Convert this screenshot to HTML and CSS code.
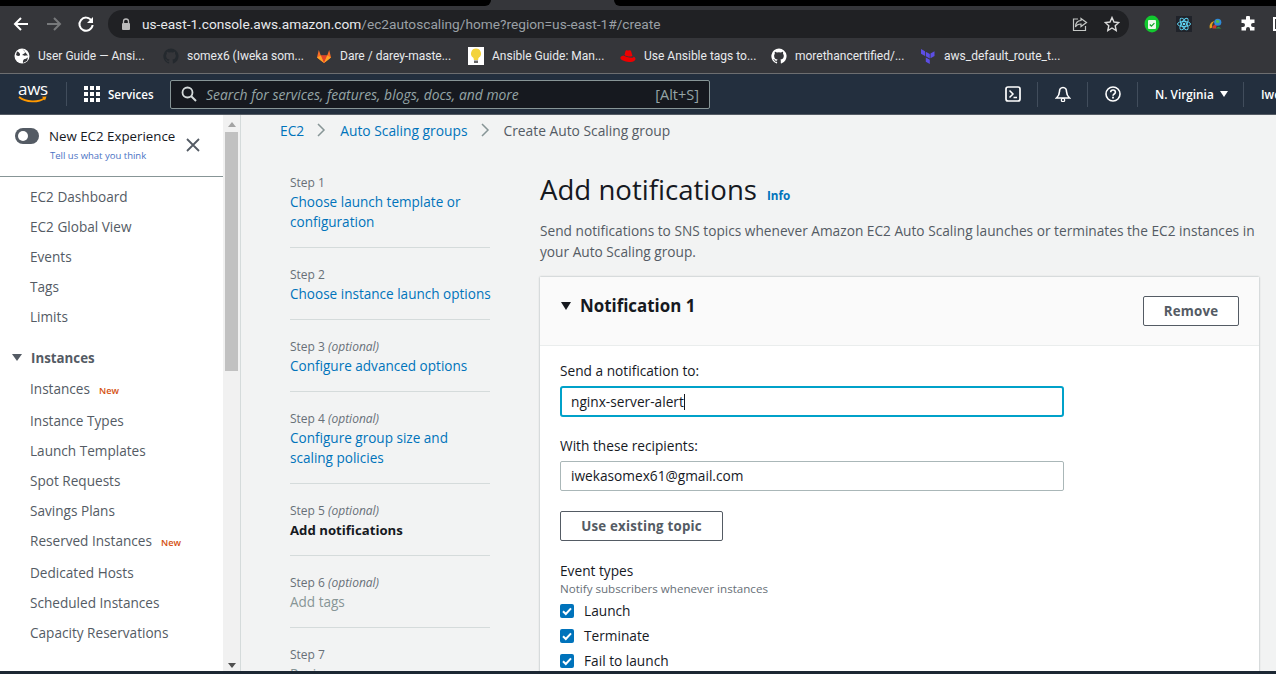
FILE: index.html
```html
<!DOCTYPE html>
<html lang="en">
<head>
<meta charset="utf-8">
<title>Create Auto Scaling group</title>
<link rel="stylesheet" href="styles.css">
</head>
<body>
<div class="window">
  <div class="tabstrip"><div class="tab-l"></div><div class="tab-gap"></div><div class="tab-r"></div></div>
  <div class="toolbar">
    <svg class="tb-ico" width="18" height="18" viewBox="0 0 18 18"><path d="M16 9H3M9 3L3 9l6 6" fill="none" stroke="#fff" stroke-width="2"/></svg>
    <svg class="tb-ico" width="18" height="18" viewBox="0 0 18 18"><path d="M2 9h13M9 3l6 6-6 6" fill="none" stroke="#77797b" stroke-width="2"/></svg>
    <svg class="tb-ico" width="18" height="18" viewBox="0 0 18 18"><path d="M14.5 5.5A6.6 6.6 0 1 0 15.6 10" fill="none" stroke="#fff" stroke-width="2"/><path d="M16 2v6h-6z" fill="#fff"/></svg>
    <div class="omnibox">
      <svg width="10" height="13" viewBox="0 0 10 13"><path d="M2.5 5V3.5a2.5 2.5 0 0 1 5 0V5" fill="none" stroke="#bbb" stroke-width="1.3"/><rect x="1" y="5" width="8" height="7" rx="1" fill="#bbb"/></svg>
      <div class="url"><span class="url-host">us-east-1.console.aws.amazon.com</span>/ec2autoscaling/home?region=us-east-1#/create</div>
      <svg class="omni-ico" width="16" height="16" viewBox="0 0 16 16"><path d="M6 3H1.500v11.500h12V10M9 2.500l5.500 4-5.500 4V8C6 8 4.500 9 3.500 11c0-4 2-6.500 5.500-6.500z" fill="none" stroke="#c4c7c5" stroke-width="1.200"/></svg>
      <svg class="omni-ico" width="16" height="16" viewBox="0 0 16 16"><path d="M8 1.500l2 4.500 4.800.5-3.600 3.200 1 4.800L8 12l-4.200 2.500 1-4.800L1.200 6.500 6 6z" fill="none" stroke="#dcdcdc" stroke-width="1.400"/></svg>
    </div>
    <div class="ext-row">
      <svg width="16" height="18" viewBox="0 0 16 18"><ellipse cx="8" cy="9" rx="7.500" ry="8.500" fill="#12c92f"/><rect x="4" y="5" width="8" height="9" rx="1" fill="#eafbea"/><path d="M5.800 9.500l1.600 1.700 3-3" stroke="#12a02a" stroke-width="1.200" fill="none"/></svg>
      <svg width="16" height="16" viewBox="0 0 16 16"><rect width="16" height="16" fill="#20232a"/><g fill="none" stroke="#61dafb" stroke-width=".9"><ellipse cx="8" cy="8" rx="6.500" ry="2.600"/><ellipse cx="8" cy="8" rx="6.500" ry="2.600" transform="rotate(60 8 8)"/><ellipse cx="8" cy="8" rx="6.500" ry="2.600" transform="rotate(120 8 8)"/></g><circle cx="8" cy="8" r="1.300" fill="#61dafb"/></svg>
      <svg width="16" height="16" viewBox="0 0 18 16"><path d="M2 13C1 8 4 5 8 5c-3 1-4 4-3 7z" fill="#e2a11a"/><path d="M5 13c0-3 2-5 5-5l-1 5z" fill="#d3352c"/><circle cx="11" cy="6" r="4" fill="#2f8bd8"/><path d="M9 4c2-1 4 0 4 2-1 1-3 1-4 0z" fill="#4fc04a"/><path d="M8 13h7l-3-2z" fill="#2e9a3a"/></svg>
      <svg width="16" height="16" viewBox="0 0 16 16"><path d="M6 1.500a2 2 0 0 1 4 0V3.500h4.500V7h-1.500a2 2 0 0 0 0 4h1.500v3.500H10V13a2 2 0 0 0-4 0v1.500H1.500V11H3a2 2 0 0 0 0-4H1.500V3.500H6z" fill="#fff"/></svg>
    </div>
    <div class="profile-edge"></div>
  </div>
  <div class="bookmarks">
    <div class="bm"><svg class="bm-ico" width="16" height="16" viewBox="0 0 16 16"><circle cx="8" cy="8" r="7.500" fill="#fff"/><path d="M3 3.500c2 .5 3.500 2 3 3.500S3.500 8 2 7M9 15c-.5-2 .5-4 2-4s2-1.500 3-1.500L13 13zM8.500 1c1 1 3 2 2.500 3.500S8 6 8.500 7s3 .5 5.500.5" fill="#35363a"/></svg><span>User Guide — Ansi...</span></div>
    <div class="bm"><svg class="bm-ico" width="16" height="16" viewBox="0 0 16 16"><path d="M8 .5a7.700 7.700 0 0 0-2.400 15c.4 0 .5-.2.500-.4v-1.400c-2.100.5-2.600-1-2.600-1-.4-.9-.9-1.100-.9-1.100-.7-.5 0-.5 0-.5.800 0 1.200.8 1.200.8.700 1.200 1.900.9 2.300.7 0-.5.300-.9.500-1.100-1.700-.2-3.500-.9-3.500-3.800 0-.8.300-1.500.8-2-.1-.2-.4-1 0-2 0 0 .7-.2 2.100.8a7 7 0 0 1 3.800 0c1.500-1 2.100-.8 2.100-.8.400 1 .2 1.800.1 2 .5.500.8 1.200.8 2 0 3-1.800 3.600-3.500 3.800.3.200.5.700.5 1.400v2.200c0 .2.100.5.500.4A7.700 7.700 0 0 0 8 .5z" fill="#24292e"/></svg><span>somex6 (Iweka som...</span></div>
    <div class="bm"><svg class="bm-ico" width="16" height="16" viewBox="0 0 16 16"><path d="M8 15L1 9.500 2.800 2l2 5.500h6.400l2-5.500L15 9.500z" fill="#fc6d26"/><path d="M8 15L4.800 7.500h6.400z" fill="#e24329"/><path d="M1 9.500L8 15 4.800 7.500zM15 9.500L8 15l3.200-7.500z" fill="#fca326"/></svg><span>Dare / darey-maste...</span></div>
    <div class="bm"><svg class="bm-ico" width="16" height="18" viewBox="0 0 16 18"><rect width="16" height="18" fill="#fff"/><path d="M8 1.500a5 5 0 0 1 3 9c-.7.600-.8 1.500-.8 2.500H5.800c0-1-.1-1.900-.8-2.500a5 5 0 0 1 3-9z" fill="#f3d33b"/><rect x="6" y="13.500" width="4" height="2.500" fill="#666"/></svg><span>Ansible Guide: Man...</span></div>
    <div class="bm"><svg class="bm-ico" width="16" height="14" viewBox="0 0 16 14"><path d="M4.500 6l1-4c.2-.8 1.200-1 2-.6.500.2 1 .2 1.500 0 .8-.4 1.800-.2 2 .6l1.500 5C10 8 6.500 7.500 4.500 6z" fill="#e00"/><path d="M3.500 6.500C1 7 0 8 .5 9.500c1 2 6 3.500 10 3.500 3 0 5-1.500 5-3 0-1-.8-2-2-2.500.2 1-.5 1.200-2 1.200-3 0-6-1-8-2.200z" fill="#e00"/></svg><span>Use Ansible tags to...</span></div>
    <div class="bm"><svg class="bm-ico" width="16" height="16" viewBox="0 0 16 16"><path d="M8 .5a7.700 7.700 0 0 0-2.400 15c.4 0 .5-.2.500-.4v-1.400c-2.100.5-2.600-1-2.600-1-.4-.9-.9-1.100-.9-1.100-.7-.5 0-.5 0-.5.800 0 1.200.8 1.200.8.700 1.200 1.900.9 2.300.7 0-.5.300-.9.500-1.100-1.700-.2-3.500-.9-3.500-3.800 0-.8.300-1.500.8-2-.1-.2-.4-1 0-2 0 0 .7-.2 2.100.8a7 7 0 0 1 3.800 0c1.500-1 2.100-.8 2.100-.8.400 1 .2 1.800.1 2 .5.500.8 1.200.8 2 0 3-1.800 3.600-3.500 3.800.3.200.5.700.5 1.400v2.200c0 .2.100.5.500.4A7.700 7.700 0 0 0 8 .5z" fill="#fff"/></svg><span>morethancertified/...</span></div>
    <div class="bm"><svg class="bm-ico" width="16" height="16" viewBox="0 0 16 16"><path d="M1 1l4 2.300V8L1 5.700zM5.800 3.700l4 2.300v4.600l-4-2.300zM14.500 3.300l-4 2.300v4.600l4-2.300zM5.800 9.500l4 2.300v4.200l-4-2.300z" fill="#5c4ee5"/></svg><span>aws_default_route_t...</span></div>
  </div>
  <header class="awsbar">
    <div class="aws-logo">
      <span class="aws-word">aws</span>
      <svg width="30" height="8" viewBox="0 0 30 8"><path d="M1 1c7 5.500 19 6 26 1" fill="none" stroke="#f90" stroke-width="1.800"/><path d="M24 .8l4.500-.3-1.500 4z" fill="#f90"/></svg>
    </div>
    <div class="bar-sep"></div>
    <svg class="grid-ico" width="16" height="16" viewBox="0 0 16 16" fill="#fff"><rect width="4" height="4"/><rect x="6" width="4" height="4"/><rect x="12" width="4" height="4"/><rect y="6" width="4" height="4"/><rect x="6" y="6" width="4" height="4"/><rect x="12" y="6" width="4" height="4"/><rect y="12" width="4" height="4"/><rect x="6" y="12" width="4" height="4"/><rect x="12" y="12" width="4" height="4"/></svg>
    <span class="services">Services</span>
    <div class="search">
      <svg width="16" height="16" viewBox="0 0 16 16"><circle cx="6.500" cy="6.500" r="5" fill="none" stroke="#d5dbdb" stroke-width="1.800"/><path d="M10 10l5 5" stroke="#d5dbdb" stroke-width="2"/></svg>
      <span class="search-ph">Search for services, features, blogs, docs, and more</span>
      <span class="search-key">[Alt+S]</span>
    </div>
    <div class="bar-right">
      <div class="bar-item"><svg width="16" height="16" viewBox="0 0 16 16"><rect x="1" y="1" width="14" height="14" rx="2" fill="none" stroke="#fff" stroke-width="1.700"/><path d="M4.500 4.500L8 8l-3.500 3.500M8.500 11.500H12" fill="none" stroke="#fff" stroke-width="1.500"/></svg></div>
      <div class="bar-item"><svg width="16" height="16" viewBox="0 0 16 16"><path d="M8 1.500c-2.500 0-3.500 2-3.500 4 0 3-1 4.500-3 6.500h13c-2-2-3-3.500-3-6.500 0-2-1-4-3.500-4z" fill="none" stroke="#fff" stroke-width="1.600"/><circle cx="8" cy="14" r="1.700" fill="none" stroke="#fff" stroke-width="1.200"/></svg></div>
      <div class="bar-item"><svg width="16" height="16" viewBox="0 0 16 16"><circle cx="8" cy="8" r="7" fill="none" stroke="#fff" stroke-width="1.600"/><path d="M5.700 6.300c0-3 4.700-3 4.700 0 0 1.700-2.400 1.700-2.400 3.400" fill="none" stroke="#fff" stroke-width="1.600"/><rect x="7.100" y="10.700" width="1.800" height="1.800" fill="#fff"/></svg></div>
      <div class="bar-item region"><span>N. Virginia</span><i class="caret-w"></i></div>
      <div class="bar-item user"><span>Iweka</span></div>
    </div>
  </header>
  <div class="console">
    <aside class="sidenav">
      <div class="side-scroll">
        <div class="experience">
          <div class="toggle"><i></i></div>
          <div class="exp-text">
            <div class="exp-title">New EC2 Experience</div>
            <div class="exp-link">Tell us what you think</div>
          </div>
          <svg class="exp-close" width="14" height="14" viewBox="0 0 14 14"><path d="M1 1l12 12M13 1L1 13" stroke="#545b64" stroke-width="1.800"/></svg>
        </div>
        <nav class="navlist">
          <a>EC2 Dashboard</a>
          <a>EC2 Global View</a>
          <a>Events</a>
          <a>Tags</a>
          <a>Limits</a>
          <div class="navhead"><i class="caret-d"></i>Instances</div>
          <a class="tight">Instances<em>New</em></a>
          <a>Instance Types</a>
          <a>Launch Templates</a>
          <a>Spot Requests</a>
          <a>Savings Plans</a>
          <a class="tight">Reserved Instances<em>New</em></a>
          <a>Dedicated Hosts</a>
          <a>Scheduled Instances</a>
          <a>Capacity Reservations</a>
          <div class="navhead last"><i class="caret-d"></i>Images</div>
        </nav>
      </div>
      <div class="scrollbar">
        <i class="sb-up"></i>
        <div class="sb-thumb"></div>
        <i class="sb-down"></i>
      </div>
    </aside>
    <main class="content">
      <div class="crumbs">
        <a>EC2</a><svg width="9" height="14" viewBox="0 0 9 14"><path d="M1 1l6 6-6 6" fill="none" stroke="#879596" stroke-width="1.500"/></svg><a>Auto Scaling groups</a><svg width="9" height="14" viewBox="0 0 9 14"><path d="M1 1l6 6-6 6" fill="none" stroke="#879596" stroke-width="1.500"/></svg><span>Create Auto Scaling group</span>
      </div>
      <div class="wizard">
        <ol class="steps">
          <li><small>Step 1</small><a>Choose launch template or configuration</a></li>
          <li><small>Step 2</small><a>Choose instance launch options</a></li>
          <li><small>Step 3 <em>(optional)</em></small><a>Configure advanced options</a></li>
          <li><small>Step 4 <em>(optional)</em></small><a>Configure group size and scaling policies</a></li>
          <li><small>Step 5 <em>(optional)</em></small><b>Add notifications</b></li>
          <li><small>Step 6 <em>(optional)</em></small><span class="disabled">Add tags</span></li>
          <li><small>Step 7</small><span class="disabled">Review</span></li>
        </ol>
        <section class="form">
          <div class="title-row"><h1>Add notifications</h1><a class="info">Info</a></div>
          <p class="lede">Send notifications to SNS topics whenever Amazon EC2 Auto Scaling launches or terminates the EC2 instances in your Auto Scaling group.</p>
          <div class="card">
            <div class="card-head">
              <h2><i class="caret-k"></i>Notification 1</h2>
              <button class="btn remove">Remove</button>
            </div>
            <div class="card-body">
              <label class="lbl">Send a notification to:</label>
              <div class="input focus">nginx-server-alert<i class="cursor"></i></div>
              <label class="lbl second">With these recipients:</label>
              <div class="input">iwekasomex61@gmail.com</div>
              <button class="btn topic">Use existing topic</button>
              <div class="lbl events">Event types</div>
              <div class="hint">Notify subscribers whenever instances</div>
              <div class="check"><svg width="14" height="14" viewBox="0 0 14 14"><rect width="14" height="14" rx="2" fill="#0073bb"/><path d="M3 7.200l2.800 2.800L11 4.300" fill="none" stroke="#fff" stroke-width="2"/></svg>Launch</div>
              <div class="check"><svg width="14" height="14" viewBox="0 0 14 14"><rect width="14" height="14" rx="2" fill="#0073bb"/><path d="M3 7.200l2.800 2.800L11 4.300" fill="none" stroke="#fff" stroke-width="2"/></svg>Terminate</div>
              <div class="check"><svg width="14" height="14" viewBox="0 0 14 14"><rect width="14" height="14" rx="2" fill="#0073bb"/><path d="M3 7.200l2.800 2.800L11 4.300" fill="none" stroke="#fff" stroke-width="2"/></svg>Fail to launch</div>
            </div>
          </div>
        </section>
      </div>
    </main>
  </div>
  <div class="taskbar"></div>
</div>
</body>
</html>
```
FILE: styles.css
```css
* { box-sizing: border-box; }
html, body { margin: 0; padding: 0; height: 100%; overflow: hidden; }
body { font-family: "Open Sans", "Noto Sans", sans-serif; color: #16191f; background: #fff; }
.window { width: 1276px; height: 674px; display: flex; flex-direction: column; overflow: hidden; position: relative; }

.tabstrip { height: 6px; background: #35363a; display: flex; flex: none; }
.tab-l { width: 491px; background: #000; border-bottom-right-radius: 8px; }
.tab-gap { width: 123px; }
.tab-r { flex: 1; background: #000; border-bottom-left-radius: 8px; }

.toolbar { height: 35px; background: #35363a; display: flex; align-items: center; flex: none; padding: 1px 0 0 12px; overflow: hidden; }
.tb-ico { margin-right: 15px; flex: none; }
.tb-ico:nth-child(2) { margin-right: 14px; }
.tb-ico:nth-child(3) { margin-right: 13px; }
.omnibox { width: 1021px; height: 28px; flex: none; background: #202124; border-radius: 14px; display: flex; align-items: center; padding: 0 9px 0 13px; color: #9aa0a6; font: 13.700px "Roboto", sans-serif; }
.url { flex: 1; margin-left: 11px; white-space: nowrap; }
.url-host { color: #e8eaed; }
.omni-ico { margin-left: 16px; flex: none; }
.ext-row { display: flex; align-items: center; gap: 16px; margin-left: 15px; flex: none; }
.profile-edge { width: 10px; height: 14px; border: 2px solid #fff; margin-left: 17px; flex: none; }

.bookmarks { height: 33px; background: #35363a; border-bottom: 1px solid #6d6e70; display: flex; align-items: center; padding: 0 0 2px 14px; flex: none; font: 12px "Roboto", sans-serif; color: #e8eaed; }
.bm { display: flex; align-items: center; margin-right: 14px; white-space: nowrap; }
.bm-ico { margin-right: 8px; flex: none; }
.bm:nth-child(1) { width: 135px; }
.bm:nth-child(2) { width: 139px; }
.bm:nth-child(3) { width: 138px; }
.bm:nth-child(4) { width: 138px; }
.bm:nth-child(5) { width: 137px; }
.bm:nth-child(6) { width: 135px; }

.awsbar { height: 41px; background: #232f3e; border-bottom: 1px solid #545b64; display: flex; align-items: center; padding-left: 18px; flex: none; color: #fff; font: 12.500px "Open Sans", sans-serif; overflow: hidden; }
.aws-logo { width: 30px; height: 28px; flex: none; display: flex; flex-direction: column; align-items: flex-start; }
.aws-word { font: 17px/17px "Open Sans", sans-serif; color: #fff; letter-spacing: -.3px; }
.aws-logo svg { margin-top: -1px; }
.bar-sep { width: 1px; height: 24px; background: #414d5c; margin: 0 17px 0 18px; flex: none; }
.grid-ico { flex: none; }
.services { margin-left: 8px; font-weight: 600; font-size: 11.600px; width: 45px; flex: none; white-space: nowrap; }
.search { width: 540px; height: 29px; flex: none; margin-left: 17px; background: #16191f; border: 1px solid #879596; border-radius: 2px; display: flex; align-items: center; padding: 0 10px; color: #95a5a6; }
.search-ph { flex: 1; margin-left: 9px; font-style: italic; font-size: 13.900px; white-space: nowrap; }
.search-key { font-size: 14.500px; }
.bar-right { display: flex; align-items: center; height: 25px; margin-left: 278px; flex: none; }
.bar-item { width: 50px; height: 25px; flex: none; display: flex; align-items: center; justify-content: center; border-left: 1px solid #414d5c; }
.bar-item:first-child { width: 49px; border-left: 0; }
.region { width: 106px; justify-content: flex-start; padding-left: 17px; font-size: 11.800px; font-weight: 600; gap: 6px; white-space: nowrap; }
.user { width: 60px; justify-content: flex-start; padding-left: 17px; font-size: 11.800px; font-weight: 600; white-space: nowrap; }
.caret-w { width: 0; height: 0; border-left: 4.500px solid transparent; border-right: 4.500px solid transparent; border-top: 6px solid #fff; }

.console { flex: 1; display: flex; min-height: 0; background: #f2f3f3; }
.sidenav { width: 241px; flex: none; background: #fff; display: flex; border-right: 1px solid #d5dbdb; overflow: hidden; }
.side-scroll { width: 223px; flex: none; overflow: hidden; }
.experience { height: 62px; border-bottom: 1px solid #879596; display: flex; padding: 12px 0 0 15px; }
.toggle { width: 24px; height: 16px; background: #545b64; border-radius: 8px; padding: 3px; flex: none; margin-top: 1px; }
.toggle i { display: block; width: 10px; height: 10px; background: #fff; border-radius: 50%; }
.exp-text { margin-left: 10px; }
.exp-title { font-size: 13.300px; line-height: 18px; color: #16191f; white-space: nowrap; }
.exp-link { font-size: 9.500px; line-height: 13px; margin-top: 4px; margin-left: 1px; color: #4a72c4; white-space: nowrap; }
.exp-close { margin: 11px 0 0 11px; flex: none; }
.navlist { display: flex; flex-direction: column; padding-top: 5px; }
.navlist a { height: 30px; line-height: 30px; padding-left: 30px; font-size: 13.600px; color: #545b64; white-space: nowrap; }
.navlist a.tight { height: 32px; }
.navlist em { font-style: normal; font-weight: 600; font-size: 9.200px; color: #d4500f; margin-left: 9px; }
.navhead { height: 42px; display: flex; align-items: center; padding: 9px 0 0 12px; font-weight: 700; font-size: 13.300px; color: #545b64; line-height: 20px; }
.navhead.last { padding-top: 14px; }
.caret-d { width: 0; height: 0; border-left: 5px solid transparent; border-right: 5px solid transparent; border-top: 7px solid #545b64; margin-right: 9px; }
.scrollbar { width: 17px; flex: none; background: #f1f1f1; display: flex; flex-direction: column; align-items: center; position: relative; }
.sb-up { width: 0; height: 0; margin-top: 7px; border-left: 4px solid transparent; border-right: 4px solid transparent; border-bottom: 5px solid #a3a3a3; }
.sb-thumb { width: 13px; height: 239px; margin-top: 5px; background: #c1c1c1; }
.sb-down { width: 0; height: 0; position: absolute; bottom: 6px; border-left: 4px solid transparent; border-right: 4px solid transparent; border-top: 5px solid #505050; }

.content { flex: 1; min-width: 0; overflow: hidden; padding: 0 0 0 39px; }
.crumbs { height: 30px; display: flex; align-items: center; font-size: 13.800px; color: #545b64; white-space: nowrap; }
.crumbs a { color: #0073bb; }
.crumbs svg { margin: 0 14px 0 13px; flex: none; }
.wizard { display: flex; padding-top: 25px; }
.steps { width: 201px; flex: none; list-style: none; margin: 0; padding: 0 0 0 10px; }
.steps li { padding: 5px 0 15px; border-bottom: 1px solid #d5dbdb; margin-bottom: 14px; width: 200px; }
.steps li:last-child { border: 0; }
.steps small { display: block; font-size: 12px; line-height: 16px; color: #687078; }
.steps a, .steps b, .steps .disabled { display: block; width: 204px; font-size: 13.550px; line-height: 20px; margin-top: 1px; }
.steps a { color: #0073bb; }
.steps b { font-weight: 700; font-size: 13.200px; color: #16191f; }
.steps .disabled { color: #879596; }
.form { width: 719px; flex: none; margin-left: 59px; margin-top: 2px; }
.title-row { display: flex; align-items: baseline; gap: 10px; height: 38px; }
.title-row h1 { margin: 0; font-size: 27.600px; line-height: 34px; font-weight: 400; color: #16191f; }
.info { font-size: 11.700px; font-weight: 700; color: #0073bb; }
.lede { margin: 10px 0 15px; font-size: 13.700px; line-height: 21px; color: #545b64; }
.card { background: #fff; box-shadow: 0 0 2px rgba(0,28,36,.35); }
.card-head { height: 69px; background: #fafafa; border-bottom: 1px solid #eaeded; display: flex; justify-content: space-between; align-items: flex-start; padding: 19px 20px 0 21px; }
.card-head h2 { margin: 0; font-size: 16.900px; line-height: 20px; font-weight: 700; color: #16191f; display: flex; align-items: center; gap: 9px; }
.caret-k { width: 0; height: 0; border-left: 5.500px solid transparent; border-right: 5.500px solid transparent; border-top: 8px solid #16191f; }
.btn { background: #fff; border: 1px solid #545b64; border-radius: 2px; font-family: inherit; font-weight: 700; font-size: 13.300px; color: #545b64; letter-spacing: .2px; }
.remove { width: 96px; height: 30px; padding: 0; }
.card-body { padding: 15px 20px 40px 20px; }
.lbl { display: block; font-size: 13.700px; line-height: 20px; color: #16191f; }
.second { margin-top: 19px; }
.input { width: 504px; height: 30px; border: 1px solid #aab7b8; border-radius: 2px; padding: 0 10px; font-size: 13.700px; line-height: 28px; color: #16191f; margin-top: 5px; display: flex; align-items: center; background: #fff; }
.input.focus { height: 31px; border: 2px solid #00a1c9; padding: 0 9px; border-radius: 3px; }
.cursor { display: block; width: 1px; height: 16px; background: #16191f; }
.topic { display: block; width: 163px; height: 30px; margin-top: 20px; padding: 0; }
.events { margin-top: 20px; }
.hint { font-size: 11.600px; line-height: 16px; color: #687078; margin-bottom: 1px; }
.check { display: flex; align-items: center; gap: 10px; height: 25px; font-size: 13.700px; color: #16191f; }
.check svg { flex: none; }

.taskbar { position: absolute; left: 0; right: 0; bottom: 0; height: 3px; background: #1c2733; }
```
